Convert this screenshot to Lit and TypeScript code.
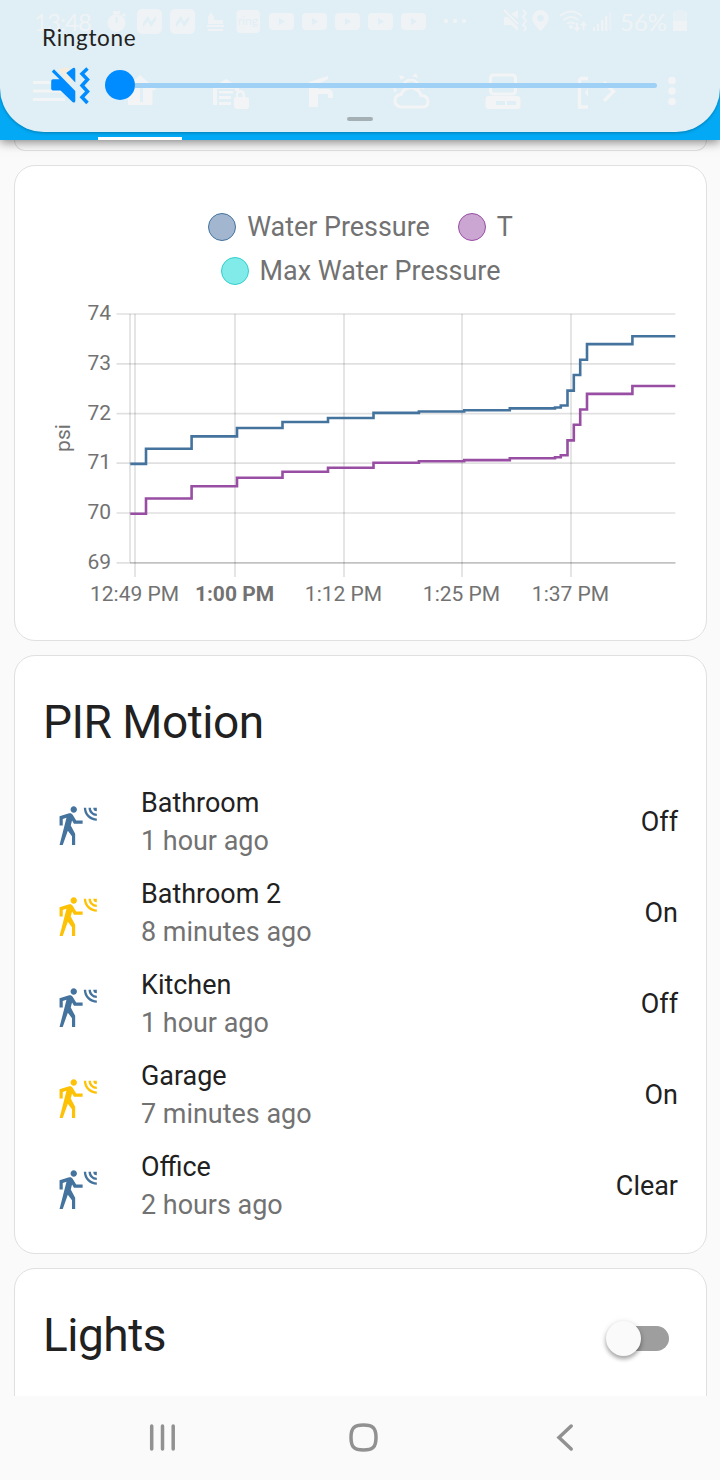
import { LitElement, html, svg, css } from "lit";
import { customElement, property } from "lit/decorators.js";

type Point = [number, number];

const PRESSURE: Point[] = [
  [130.3, 463.9], [146, 448.7], [191.6, 436.4], [237, 428], [282.5, 422], [328, 418],
  [373.5, 412.9], [418.9, 411.5], [464.2, 410.3], [509.8, 408.4], [555, 407.5], [560.8, 405.5],
  [567.5, 390.6], [573.8, 375], [580.2, 359.7], [587, 344.1], [632.4, 336.2],
];

const stepPath = (pts: Point[], dy: number, end: number) =>
  `M${pts[0][0]},${pts[0][1] + dy}` +
  pts.slice(1).map(([x, y]) => `H${x}V${y + dy}`).join("") +
  `H${end}`;

const MOTION =
  "M10,0.2C9,0.2 8.2,1 8.2,2C8.2,3 9,3.8 10,3.8C11,3.8 11.8,3 11.8,2C11.8,1 11,0.2 10,0.2M15.67,1A7.33,7.33 0 0,0 23,8.33V7A6,6 0 0,1 17,1H15.67M18.33,1C18.33,3.58 20.42,5.67 23,5.67V4.33C21.16,4.33 19.67,2.84 19.67,1H18.33M21,1A2,2 0 0,0 23,3V1H21M7.92,4.03C7.75,4.03 7.58,4.06 7.42,4.11L2,5.8V11H3.8V7.33L5.91,6.67L2,22H3.8L6.67,13.89L9,17V22H10.8V15.59L8.31,11.05L9.04,8.18L10.12,10H15V8.2H11.38L9.38,4.87C9.08,4.37 8.54,4.03 7.92,4.03Z";

@customElement("pressure-chart")
class PressureChart extends LitElement {
  static styles = css`
    :host { display: block; }
    .legend { display: flex; flex-wrap: wrap; justify-content: center; column-gap: 28px; padding: 39px 90px 0; }
    .item { display: flex; align-items: center; height: 44px; font-size: 26.9px; color: #727272; gap: 11px; white-space: nowrap; }
    .dot { box-sizing: border-box; width: 28px; height: 28px; border-radius: 50%; border: 1.5px solid; }
    .pressure { background: #a2b7cf; border-color: #44739e; }
    .target { background: #cca6d2; border-color: #984ea3; }
    .max { background: #80ebe9; border-color: #30d0ce; }
    .plot { display: block; }
    .plot text { font-family: Roboto, sans-serif; font-size: 21px; fill: #727272; }
    .plot .strong { font-weight: 700; }
  `;

  render() {
    const rows: [number, number][] = [[74, 314], [73, 363.8], [72, 413.7], [71, 463.2], [70, 513]];
    const cols: [string, number][] = [
      ["12:49 PM", 135], ["1:00 PM", 235], ["1:12 PM", 344], ["1:25 PM", 462], ["1:37 PM", 571],
    ];
    return html`
      <div class="legend">
        <div class="item"><span class="dot pressure"></span>Water Pressure</div>
        <div class="item"><span class="dot target"></span>T</div>
        <div class="item"><span class="dot max"></span>Max Water Pressure</div>
      </div>
      <svg class="plot" width="691" height="347" viewBox="15 293 691 347" fill="none">
        <g stroke="#000" stroke-opacity=".12" stroke-width="1.7">
          ${rows.map(([, y]) => svg`<path d="M116.5 ${y}H675.3"/>`)}
          ${cols.map(([, x]) => svg`<path d="M${x} 314V577"/>`)}
          <path d="M130 314V563M116.5 562.8H130"/>
          <path d="M130 562.8H675.5" stroke-opacity=".24"/>
        </g>
        ${[...rows, [69, 562.8]].map(([v, y]) => svg`<text x="111" y=${y + 6.2} text-anchor="end">${v}</text>`)}
        ${cols.map(([t, x]) => svg`<text class=${t === "1:00 PM" ? "strong" : ""} x=${x - 0.5} y="601" text-anchor="middle">${t}</text>`)}
        <text transform="translate(70 438) rotate(-90)" text-anchor="middle">psi</text>
        <path d=${stepPath(PRESSURE, 49.8, 675.3)} stroke="#984ea3" stroke-width="2.6"/>
        <path d=${stepPath(PRESSURE, 0, 675.3)} stroke="#44739e" stroke-width="2.6"/>
      </svg>
    `;
  }
}

@customElement("sensor-row")
class SensorRow extends LitElement {
  static styles = css`
    :host { display: flex; align-items: center; height: 91px; padding: 0 28px 0 41px; color: #212121; font-size: 26.95px; }
    .icon { width: 42.6px; height: 42.6px; fill: #44739e; margin-top: 12px; }
    .icon.lit { fill: #fdc106; }
    .info { flex: 1; margin-left: 42.4px; }
    .name, .ago { line-height: 38px; white-space: nowrap; }
    .ago { color: #727272; }
  `;
  @property() name = "";
  @property() ago = "";
  @property() state = "";

  render() {
    return html`
      <svg class="icon ${this.state === "On" ? "lit" : ""}" viewBox="0 0 24 24"><path d=${MOTION}></path></svg>
      <div class="info"><div class="name">${this.name}</div><div class="ago">${this.ago}</div></div>
      <div>${this.state}</div>
    `;
  }
}

@customElement("app-header")
class AppHeader extends LitElement {
  static styles = css`
    :host { display: block; position: relative; height: 140px; background: #03a9f4; box-shadow: 0 2px 10px rgba(0, 0, 0, .5); z-index: 1; }
    .bar { display: block; }
    .status { opacity: .8; }
    .bar text { font-family: Lato, sans-serif; fill: #fff; font-size: 24px; }
    .bar .ring { font-size: 12px; fill: #03a9f4; }
    .panel { position: absolute; inset: 0 0 8px; border-radius: 0 0 44px 44px; background: rgba(241, 243, 244, .93); box-shadow: 0 1px 3px rgba(0, 40, 60, .35); display: flex; flex-direction: column; }
    .title { padding: 23px 0 0 42px; font: 22.5px/30px Lato, sans-serif; letter-spacing: .7px; color: #222; }
    .slider { display: flex; align-items: center; height: 46px; margin-top: 9px; padding-left: 50px; }
    .mute { width: 40px; height: 40px; }
    .thumb { width: 30px; height: 30px; border-radius: 50%; background: #008cff; margin-left: 14.500px; }
    .track { width: 522.500px; height: 5px; border-radius: 0 3px 3px 0; background: #9fd0f6; }
    .handle { width: 26px; height: 4px; border-radius: 2px; background: #a5b0b4; margin: 9px auto 0; }
  `;

  render() {
    const tubes = [269, 302, 335, 368, 401];
    return html`
      <svg class="bar status" width="720" height="50" viewBox="0 0 720 50" fill="#fff">
        <text x="34" y="31" textLength="58">13:48</text>
        <circle cx="116.500" cy="23" r="9"/><path d="M113 11h7v3h-7zM122 15l2-2 2 2-2 2z"/>
        <path d="M116.500 23v-6" stroke="#03a9f4" stroke-width="2"/>
        ${[137, 170].map((x) => svg`<rect x=${x} y="9" width="25" height="25" rx="5"/><path d="M${x + 6} 27V23L${x + 11} 16L${x + 14} 22L${x + 19} 16V20L${x + 14} 27L${x + 11} 21Z" fill="#03a9f4"/>`)}
        <path d="M208 22V17L211 12L214 17V20H223V24H208ZM207 25H224V27H207ZM208 29H223V31H208Z"/>
        <rect x="236.500" y="10" width="23.500" height="23" rx="4"/>
        <text class="ring" x="238" y="25" textLength="20">ring</text>
        ${tubes.map((x) => svg`<rect x=${x} y="13" width="25" height="17" rx="4"/><path d="M${x + 10} 18v7l6-3.500z" fill="#03a9f4"/>`)}
        <circle cx="446" cy="21" r="2.200"/><circle cx="455" cy="21" r="2.200"/><circle cx="464" cy="21" r="2.200"/>
        <path d="M504 17h4l10 10v4l-7-6h-7zM511 14l7-4v9z"/>
        <path d="M504 10l14 14M523 10l3 3-3 4 3 4-3 4 3 3-2 3" stroke="#fff" stroke-width="2" fill="none"/>
        <path fill-rule="evenodd" d="M540.500 10a8.300 8.300 0 0 0-8.300 8.300c0 5 8.300 13 8.300 13s8.300-8 8.300-13a8.300 8.300 0 0 0-8.300-8.300zM540.500 15a3 3 0 1 1 0 6.500 3 3 0 1 1 0-6.500z"/>
        <path d="M560 16q11-9 22 0M563.500 20q7.500-6 15 0M567 24q4-3 8 0M577 23v7l-2.500-2.500M577 30l2.500-2.500M583.500 30v-7l-2.500 2.500M583.500 23l2.500 2.500" fill="none" stroke="#fff" stroke-width="2"/>
        <circle cx="571" cy="27" r="2"/>
        <path d="M593 27h2v4h-2zM597 24h2v7h-2zM601 20h2.500v11h-2.500zM605 16h2.500v15h-2.500z"/><path opacity=".5" d="M609 12h2.500v19h-2.500z"/>
        <text x="620" y="31" textLength="47">56%</text>
        <path opacity=".4" d="M673 12h3.500v-2h7v2h3.500v9h-14z"/><path d="M673 21h14v10h-14z"/>
      </svg>
      <svg class="bar" width="720" height="87" viewBox="0 50 720 87" fill="#fff">
        <path d="M33 81h32v3H33zM33 89.500h32v3H33zM33 98h32v3H33z"/>
        <path fill-rule="evenodd" d="M140 75L157 90H152.500V105H128V90H123zM140 85h3v17h-3z"/>
        <path d="M213 105V87L226 79L239 87V91H235V89H217V105zM219 91h14v2.500h-14zM219 96h12v3h-12zM219 102h12v3h-12z"/>
        <path fill-rule="evenodd" d="M236 97v-2q0-5 4.500-5t4.500 5v2q4 0 4 2v7q0 3-3 3h-9q-3 0-3-3v-7q0-2 2-2zM238 97h4.500v-2q0-2.500-2.200-2.500t-2.300 2.500z"/>
        <path d="M309 82L328 76V79L318 84V89H329Q333 90 333 94V98H328V94H318V107H309z"/>
        <path d="M401 107q-6-1-6-6.500t6-6q2-6 10-7 8 1 10 8 7 0 7 6t-6 5.500z" fill="none" stroke="#fff" stroke-width="3"/>
        <path d="M402 88q2-8 9-8t9 9" fill="none" stroke="#fff" stroke-width="2.500"/><path d="M399 75l6 2-4 3zM412 76l4-3 2 5zM423 84l3 3-4 3zM393 88l4 1-2 4z"/>
        <rect x="490.500" y="75" width="25" height="19" rx="3" fill="none" stroke="#fff" stroke-width="3"/>
        <path fill-rule="evenodd" d="M489 96h28q3.500 0 3.500 3v7q0 3-3 3h-29q-3 0-3-3v-7q0-3 3.500-3zM496 101v4h9v-4zM507 101v4h9v-4z"/>
        <path d="M588 78.500H582q-2.500 0-2.500 3V107H588M604 82l9.500 9.500L604 101" fill="none" stroke="#fff" stroke-width="3.400"/><path d="M588 88v9l-3-4.500z"/>
        <circle cx="672" cy="80.500" r="3.800"/><circle cx="672" cy="91" r="3.800"/><circle cx="672" cy="101.500" r="3.800"/>
      </svg>
      <svg class="bar" width="720" height="3"><rect x="98" width="84" height="3" fill="#fff"/></svg>
      <div class="panel">
        <div class="title">Ringtone</div>
        <div class="slider">
          <svg class="mute" viewBox="50 65.500 40 40">
            <path d="M58.500 70.500Q64 66 70.500 69.500L66 73.500L73 81L70 83.500Z" fill="#f4eddf"/>
            <path d="M51.200 81.500Q51.200 79.700 53 79.700H59.500L51.800 72.200L54 69.700L75.300 91.500V101.500Q75 104 72.500 102.500L60.500 91H53Q51.200 91 51.200 89.200ZM66.200 73.500L73 68.500Q75.300 67.500 75.300 70V83Z" fill="#008cff"/>
            <path d="M87.500 69l-5.500 5.200 5.500 5.800-5.500 6 5.500 6-5.500 5.700 5.500 5.800" fill="none" stroke="#008cff" stroke-width="3.500"/>
          </svg>
          <div class="thumb"></div><div class="track"></div>
        </div>
        <div class="handle"></div>
      </div>
    `;
  }
}

@customElement("app-root")
class AppRoot extends LitElement {
  static styles = css`
    :host { display: flex; flex-direction: column; width: 720px; height: 1480px; overflow: hidden; background: #fafafa; font-family: Roboto, sans-serif; color: #212121; }
    .cards { flex: 1; min-height: 0; overflow: hidden; display: flex; flex-direction: column; gap: 14px; padding: 0 13px 0 14px; }
    .card { box-sizing: border-box; flex: none; border: 1px solid #e0e0e0; border-radius: 21px; background: #fff; }
    .above { height: 11px; border-top: 0; border-radius: 0 0 21px 21px; background: #fafafa; }
    .chart { height: 476px; }
    .motion { height: 599px; }
    .lights { height: 200px; }
    .heading { display: flex; align-items: center; justify-content: space-between; padding: 0 37px 0 28px; font-size: 46px; letter-spacing: -.5px; line-height: 64px; }
    .motion .heading { padding-top: 34px; margin-bottom: 22px; }
    .lights .heading { padding-top: 34px; }
    .switch { display: flex; align-items: center; width: 61px; height: 25px; border-radius: 13px; background: #9e9e9e; margin-top: 6px; }
    .knob { width: 35px; height: 35px; flex: none; border-radius: 50%; background: #fafafa; margin-left: -2px; box-shadow: 0 3px 4px rgba(0, 0, 0, .3), 0 1px 6px rgba(0, 0, 0, .12); }
    .nav { display: block; flex: none; background: #fafafa; }
  `;

  render() {
    const sensors = [
      ["Bathroom", "1 hour ago", "Off"],
      ["Bathroom 2", "8 minutes ago", "On"],
      ["Kitchen", "1 hour ago", "Off"],
      ["Garage", "7 minutes ago", "On"],
      ["Office", "2 hours ago", "Clear"],
    ];
    return html`
      <app-header></app-header>
      <div class="cards">
        <div class="card above"></div>
        <div class="card chart"><pressure-chart></pressure-chart></div>
        <div class="card motion">
          <div class="heading">PIR Motion</div>
          ${sensors.map(([n, a, s]) => html`<sensor-row .name=${n} .ago=${a} .state=${s}></sensor-row>`)}
        </div>
        <div class="card lights">
          <div class="heading">Lights<span class="switch"><span class="knob"></span></span></div>
        </div>
      </div>
      <svg class="nav" width="720" height="84" viewBox="0 1396 720 84" fill="none" stroke="#919191" stroke-width="3.500" stroke-linecap="round">
        <path d="M151.700 1426V1449M162.500 1426V1449M173.200 1426V1449"/>
        <path d="M363.500 1425c9.500 0 12.500 3 12.500 12.500s-3 12.500-12.500 12.500-12.500-3-12.500-12.500 3-12.500 12.500-12.500z"/>
        <path d="M571.200 1426L559 1437.500L571.200 1449"/>
      </svg>
    `;
  }
}
